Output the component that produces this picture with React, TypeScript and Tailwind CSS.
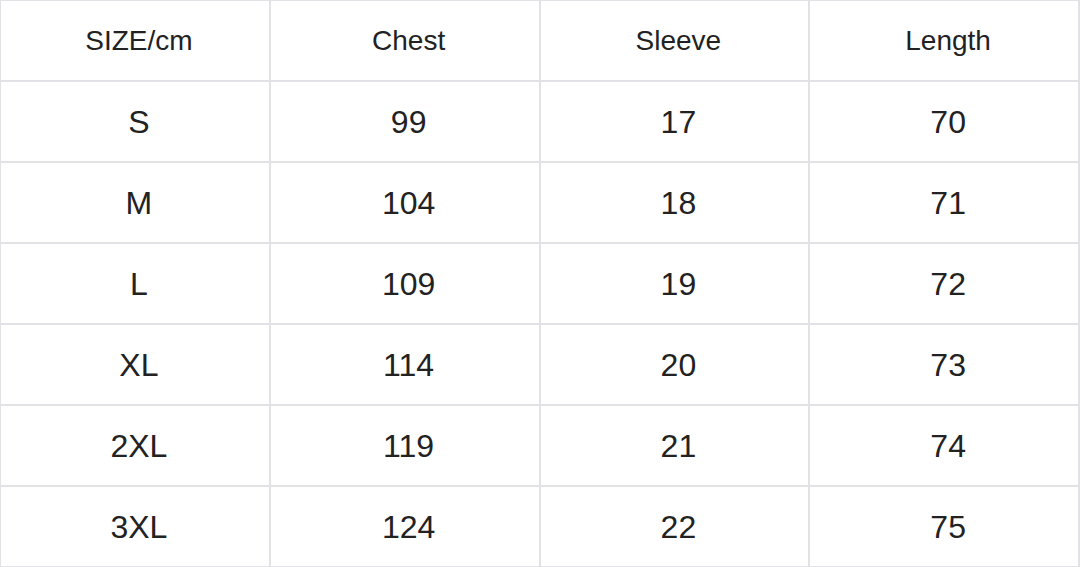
const header = ["SIZE/cm", "Chest", "Sleeve", "Length"];

const rows = [
  ["S", "99", "17", "70"],
  ["M", "104", "18", "71"],
  ["L", "109", "19", "72"],
  ["XL", "114", "20", "73"],
  ["2XL", "119", "21", "74"],
  ["3XL", "124", "22", "75"],
];

const App = () => (
  <div className="w-[1080px] h-[567px] bg-[#e2e2e6] pt-px pl-px pr-[2px] pb-px font-['Liberation_Sans',Arial,sans-serif] text-[#222]">
    <div className="grid grid-cols-4 grid-rows-7 gap-[2px] h-full">
      {header.map((h) => (
        <div key={h} className="bg-white flex items-center justify-center pl-[8px] text-[28px]">
          {h}
        </div>
      ))}
      {rows.map((r) =>
        r.map((c, i) => (
          <div key={r[0] + i} className="bg-white flex items-center justify-center pl-[8px] text-[32px]">
            {c}
          </div>
        ))
      )}
    </div>
  </div>
);

export default App;
